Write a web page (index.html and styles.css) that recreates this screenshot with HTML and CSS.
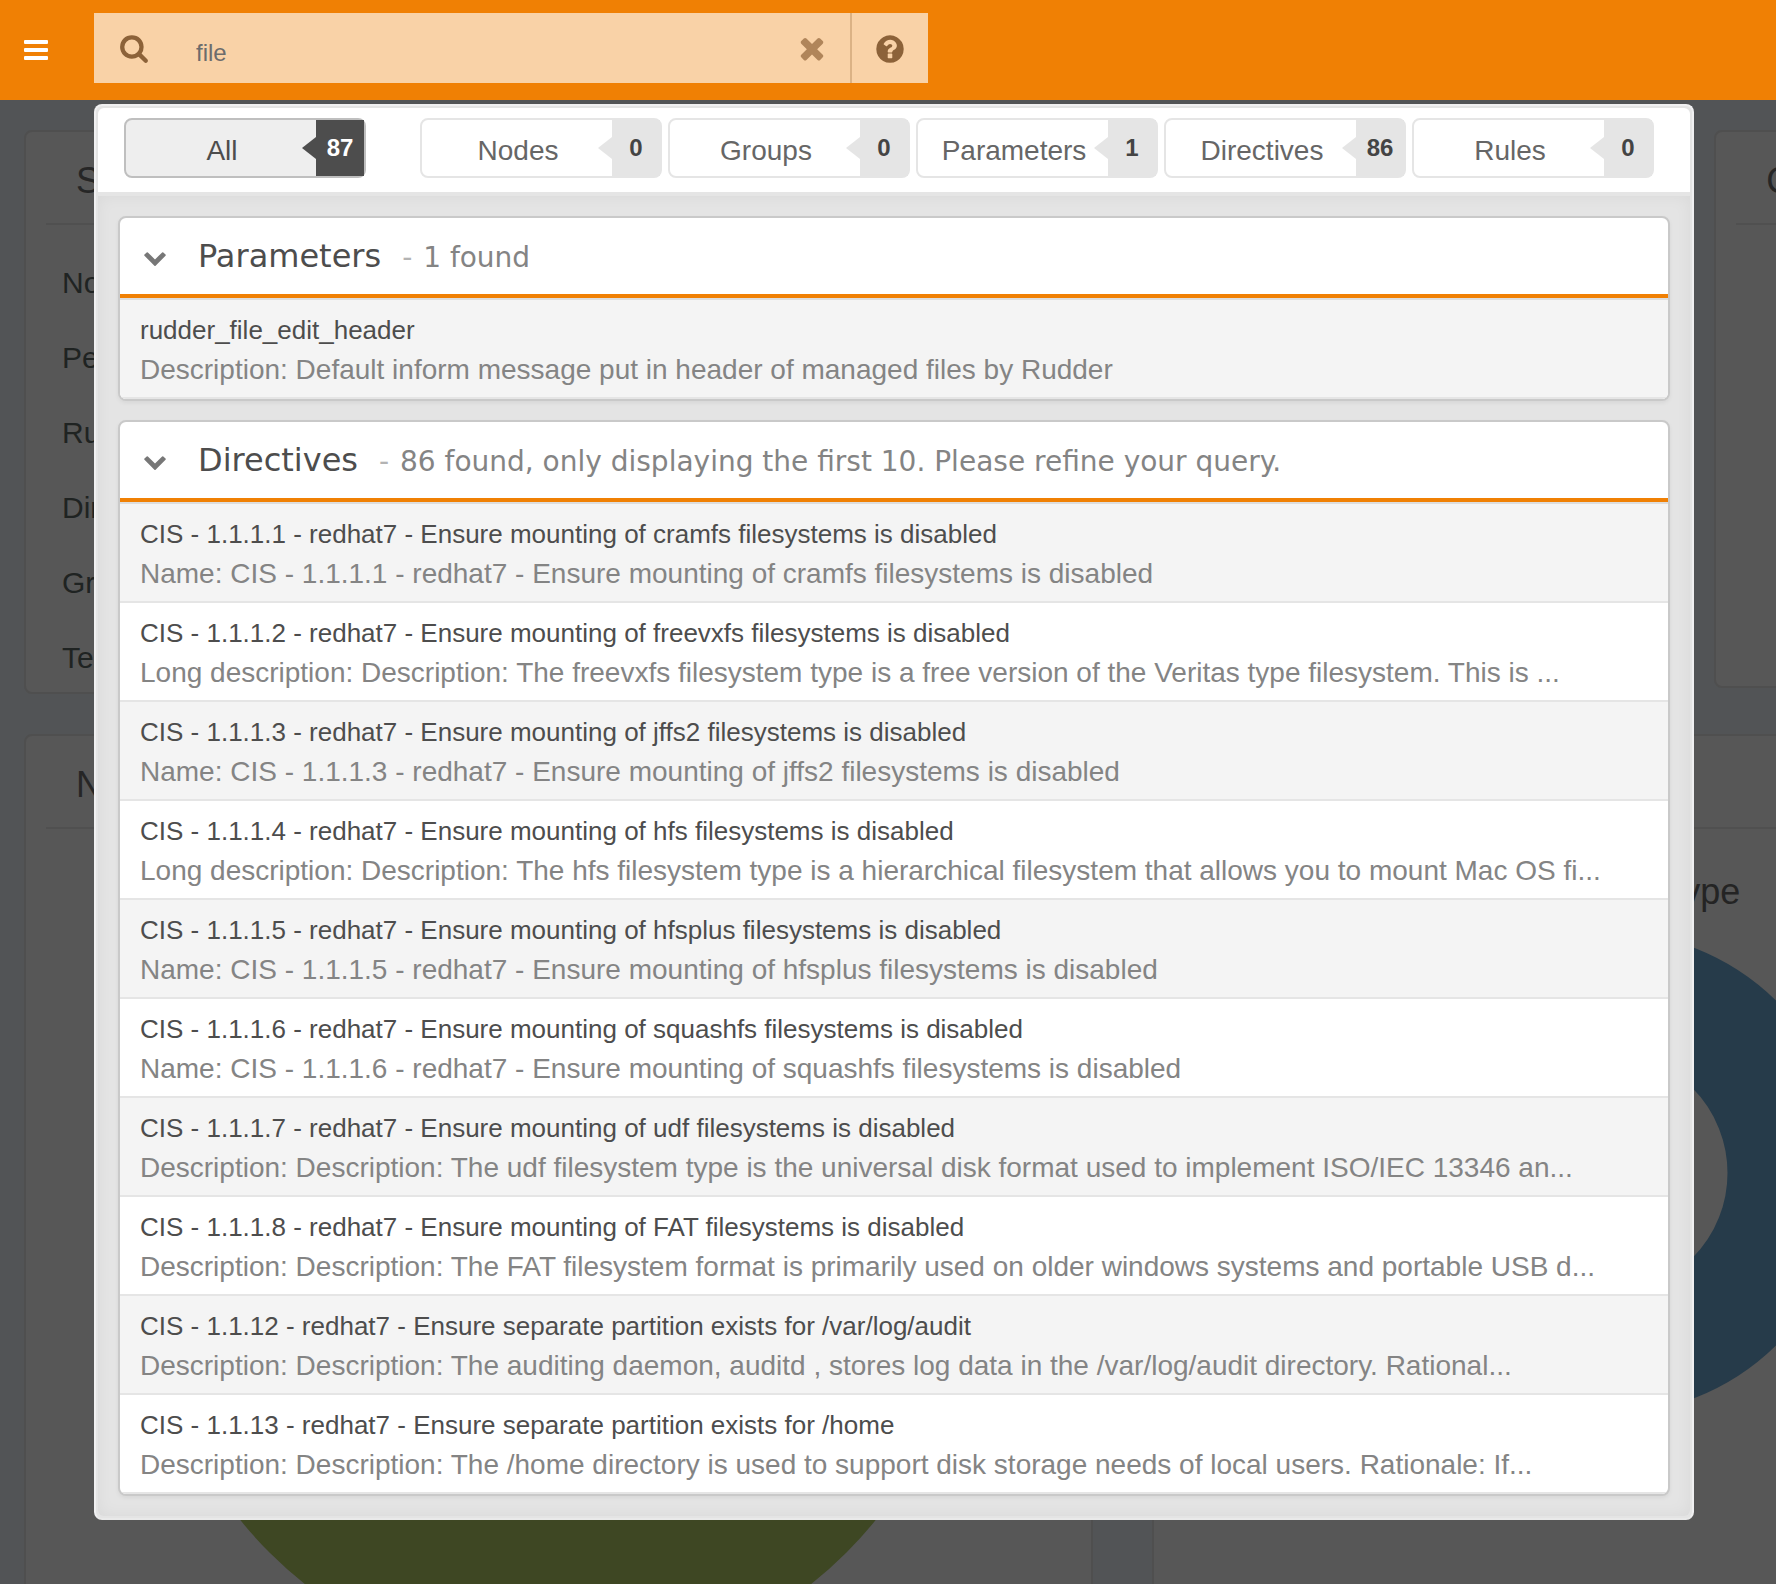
FILE: index.html
```html
<!DOCTYPE html>
<html lang="en">
<head>
<meta charset="utf-8">
<title>Rudder - Quick search</title>
<link rel="stylesheet" href="styles.css">
</head>
<body>
<svg class="sprite" aria-hidden="true">
  <symbol id="i-search" viewBox="0 0 1792 1792"><path d="M1216 832q0-185-131.5-316.5t-316.5-131.5-316.5 131.5-131.5 316.5 131.5 316.5 316.5 131.5 316.5-131.5 131.5-316.5zm512 832q0 52-38 90t-90 38q-54 0-90-38l-343-342q-179 124-399 124-143 0-273.5-55.5t-225-150-150-225-55.5-273.5 55.5-273.5 150-225 225-150 273.5-55.5 273.5 55.5 225 150 150 225 55.5 273.5q0 220-124 399l343 343q37 37 37 90z"/></symbol>
  <symbol id="i-times" viewBox="0 0 1792 1792"><path d="M1490 1322q0 40-28 68l-136 136q-28 28-68 28t-68-28l-294-294-294 294q-28 28-68 28t-68-28l-136-136q-28-28-28-68t28-68l294-294-294-294q-28-28-28-68t28-68l136-136q28-28 68-28t68 28l294 294 294-294q28-28 68-28t68 28l136 136q28 28 28 68t-28 68l-294 294 294 294q28 28 28 68z"/></symbol>
  <symbol id="i-help" viewBox="0 0 1792 1792"><path d="M1024 1376v-192q0-14-9-23t-23-9h-192q-14 0-23 9t-9 23v192q0 14 9 23t23 9h192q14 0 23-9t9-23zm256-672q0-88-55.5-163t-138.5-116-170-41q-243 0-371 213-15 24 8 42l132 100q7 6 19 6 16 0 25-12 53-68 86-92 34-24 86-24 48 0 85.5 26t37.5 59q0 38-20 61t-68 45q-63 28-115.5 86.5t-52.5 125.5v36q0 14 9 23t23 9h192q14 0 23-9t9-23q0-19 21.5-49.5t54.5-49.5q32-18 49-28.5t46-35 44.5-48 28-60.5 12.5-81zm384 192q0 209-103 385.5t-279.5 279.5-385.5 103-385.5-103-279.5-279.5-103-385.5 103-385.5 279.5-279.5 385.5-103 385.5 103 279.5 279.5 103 385.5z"/></symbol>
  <symbol id="i-chevron" viewBox="0 0 1792 1792"><path d="M1683 808l-742 741q-19 19-45 19t-45-19l-742-741q-19-19-19-45.5t19-45.5l166-165q19-19 45-19t45 19l531 531 531-531q19-19 45-19t45 19l166 165q19 19 19 45.5t-19 45.5z"/></symbol>
</svg>

<header class="topbar">
  <button class="menu" type="button" aria-label="Toggle menu">
    <svg width="24" height="20" viewBox="0 0 24 20"><rect width="24" height="4" rx="1"/><rect y="8" width="24" height="4" rx="1"/><rect y="16" width="24" height="4" rx="1"/></svg>
  </button>
  <form class="search">
    <label class="search-icon" for="query" aria-label="Search"><svg width="30" height="30"><use href="#i-search"/></svg></label>
    <input id="query" class="search-input" type="text" value="file">
    <button class="search-clear" type="button" aria-label="Clear"><svg width="34" height="34"><use href="#i-times"/></svg></button>
    <button class="search-help" type="button" aria-label="Help"><svg width="32" height="32"><use href="#i-help"/></svg></button>
  </form>
</header>

<main class="dashboard">
  <div class="row row-top">
    <section class="card card-stats">
      <h2 class="card-title">S</h2>
      <ul class="stats">
        <li>No</li>
        <li>Pe</li>
        <li>Ru</li>
        <li>Dir</li>
        <li>Gr</li>
        <li>Te</li>
      </ul>
    </section>
    <section class="card card-compliance">
      <h2 class="card-title">C</h2>
    </section>
  </div>
  <div class="row row-bottom">
    <section class="card card-nodes">
      <h2 class="card-title">N</h2>
      <svg class="chart chart-green" width="816" height="816" viewBox="0 0 816 816"><circle cx="408" cy="408" r="306" fill="none" stroke="#3e4723" stroke-width="204"/></svg>
    </section>
    <section class="card card-machines">
      <h2 class="card-title"></h2>
      <h3 class="chart-title">ype</h3>
      <svg class="chart" width="484" height="484" viewBox="0 0 484 484"><circle cx="242" cy="242" r="181" fill="none" stroke="#263b4a" stroke-width="121"/></svg>
    </section>
  </div>
</main>

<div class="results">
  <nav class="tabs">
    <button class="tab tab-all active" type="button"><span class="tab-label">All</span><span class="tab-count">87</span></button>
    <button class="tab" type="button"><span class="tab-label">Nodes</span><span class="tab-count">0</span></button>
    <button class="tab" type="button"><span class="tab-label">Groups</span><span class="tab-count">0</span></button>
    <button class="tab" type="button"><span class="tab-label">Parameters</span><span class="tab-count">1</span></button>
    <button class="tab" type="button"><span class="tab-label">Directives</span><span class="tab-count">86</span></button>
    <button class="tab" type="button"><span class="tab-label">Rules</span><span class="tab-count">0</span></button>
  </nav>
  <div class="groups">
    <section class="group">
      <h3 class="group-head"><svg class="chevron" width="24" height="24"><use href="#i-chevron"/></svg>Parameters<small class="found"><span class="dash">-</span> 1 found</small></h3>
      <ul class="items">
        <li><a class="item" href="#"><span class="name">rudder_file_edit_header</span><span class="desc">Description: Default inform message put in header of managed files by Rudder</span></a></li>
      </ul>
    </section>
    <section class="group">
      <h3 class="group-head"><svg class="chevron" width="24" height="24"><use href="#i-chevron"/></svg>Directives<small class="found"><span class="dash">-</span> 86 found, only displaying the first 10. Please refine your query.</small></h3>
      <ul class="items">
        <li><a class="item" href="#"><span class="name">CIS - 1.1.1.1 - redhat7 - Ensure mounting of cramfs filesystems is disabled</span><span class="desc">Name: CIS - 1.1.1.1 - redhat7 - Ensure mounting of cramfs filesystems is disabled</span></a></li>
        <li><a class="item" href="#"><span class="name">CIS - 1.1.1.2 - redhat7 - Ensure mounting of freevxfs filesystems is disabled</span><span class="desc">Long description: Description: The freevxfs filesystem type is a free version of the Veritas type filesystem. This is ...</span></a></li>
        <li><a class="item" href="#"><span class="name">CIS - 1.1.1.3 - redhat7 - Ensure mounting of jffs2 filesystems is disabled</span><span class="desc">Name: CIS - 1.1.1.3 - redhat7 - Ensure mounting of jffs2 filesystems is disabled</span></a></li>
        <li><a class="item" href="#"><span class="name">CIS - 1.1.1.4 - redhat7 - Ensure mounting of hfs filesystems is disabled</span><span class="desc">Long description: Description: The hfs filesystem type is a hierarchical filesystem that allows you to mount Mac OS fi...</span></a></li>
        <li><a class="item" href="#"><span class="name">CIS - 1.1.1.5 - redhat7 - Ensure mounting of hfsplus filesystems is disabled</span><span class="desc">Name: CIS - 1.1.1.5 - redhat7 - Ensure mounting of hfsplus filesystems is disabled</span></a></li>
        <li><a class="item" href="#"><span class="name">CIS - 1.1.1.6 - redhat7 - Ensure mounting of squashfs filesystems is disabled</span><span class="desc">Name: CIS - 1.1.1.6 - redhat7 - Ensure mounting of squashfs filesystems is disabled</span></a></li>
        <li><a class="item" href="#"><span class="name">CIS - 1.1.1.7 - redhat7 - Ensure mounting of udf filesystems is disabled</span><span class="desc">Description: Description: The udf filesystem type is the universal disk format used to implement ISO/IEC 13346 an...</span></a></li>
        <li><a class="item" href="#"><span class="name">CIS - 1.1.1.8 - redhat7 - Ensure mounting of FAT filesystems is disabled</span><span class="desc">Description: Description: The FAT filesystem format is primarily used on older windows systems and portable USB d...</span></a></li>
        <li><a class="item" href="#"><span class="name">CIS - 1.1.12 - redhat7 - Ensure separate partition exists for /var/log/audit</span><span class="desc">Description: Description: The auditing daemon, auditd , stores log data in the /var/log/audit directory. Rational...</span></a></li>
        <li><a class="item" href="#"><span class="name">CIS - 1.1.13 - redhat7 - Ensure separate partition exists for /home</span><span class="desc">Description: Description: The /home directory is used to support disk storage needs of local users. Rationale: If...</span></a></li>
      </ul>
    </section>
  </div>
</div>
</body>
</html>
```
FILE: styles.css
```css
* { box-sizing: border-box; }

body {
  margin: 0;
  position: relative;
  background: #525456;
  font-family: "Liberation Sans", Arial, sans-serif;
}

h2, h3, ul { margin: 0; padding: 0; font-weight: normal; }
ul { list-style: none; }
svg { display: block; fill: currentColor; flex: none; }
button { margin: 0; padding: 0; border: 0; background: none; font: inherit; color: inherit; cursor: pointer; }
.sprite { position: absolute; width: 0; height: 0; }

/* Top bar */
.topbar {
  display: flex;
  align-items: center;
  height: 100px;
  padding: 0 24px;
  background: #f08004;
}
.menu { width: 70px; color: #fff; }
.search {
  display: flex;
  flex: 0 1 834px;
  height: 70px;
  margin-bottom: 4px;
  background: #f9d2a7;
  color: #8c6239;
}
.search-icon { display: flex; align-items: center; padding-left: 25px; }
.search-input {
  flex: 1;
  min-width: 0;
  margin-left: 47px;
  padding: 10px 0 0;
  border: 0;
  outline: 0;
  background: none;
  font: inherit;
  font-size: 24px;
  color: #6c6c6c;
}
.search-clear { display: flex; align-items: center; padding-right: 21px; color: #b0855a; }
.search-help {
  display: flex;
  align-items: center;
  justify-content: center;
  width: 78px;
  padding-top: 2px;
  border-left: 2px solid #dbb285;
}

/* Dimmed dashboard behind the results */
.dashboard {
  display: flex;
  flex-direction: column;
  gap: 40px;
  height: calc(100vh - 100px);
  padding: 30px 0 0 24px;
  overflow: hidden;
}
.row { display: flex; flex: none; align-items: flex-start; }
.row-top { gap: 639px; }
.row-bottom { gap: 59px; }
.card {
  flex: none;
  padding: 0 20px;
  border: 2px solid #4f4f4f;
  border-radius: 8px;
  background: #575757;
}
.card-title {
  height: 93px;
  padding: 0 30px;
  border-bottom: 2px solid #505050;
  font-size: 36px;
  line-height: 98px;
  color: #262626;
}
.card-stats { width: 60%; height: 564px; }
.card-compliance { width: 60%; height: 558px; }
.card-nodes { width: 61%; height: 1000px; }
.card-machines { width: 52%; height: 1000px; }
.stats {
  padding: 20px 16px;
  font-size: 30px;
  line-height: 75px;
  color: #1f2322;
}
.chart-title {
  width: 266px;
  margin: 0 auto;
  padding-top: 41px;
  font-size: 36px;
  line-height: 44px;
  text-align: right;
  color: #242424;
}
.chart { margin: 17px auto 0; }
.chart-green { margin-top: 27px; }

/* Search results */
.results {
  position: absolute;
  top: 104px;
  left: 94px;
  right: 82px;
  padding: 2px;
  border: 2px solid #f0f0f1;
  border-bottom-color: #e9e9e9;
  border-radius: 8px;
  background: #e4e4e4;
}
.tabs {
  display: flex;
  gap: 6px;
  height: 88px;
  padding: 10px 36px 14px 26px;
  border-bottom: 4px solid #e5e5e5;
  border-radius: 6px 6px 0 0;
  background: #fff;
}
.tab {
  display: flex;
  flex: 1;
  align-items: stretch;
  min-width: 0;
  height: 60px;
  border: 2px solid #e5e5e5;
  border-radius: 8px;
  color: #666;
}
.tab-all { margin-right: 48px; }
.tab-label { flex: 1; padding-left: 2px; font-size: 28px; line-height: 62px; }
.tab-count {
  position: relative;
  width: 48px;
  background: #e5e5e5;
  font-size: 24px;
  font-weight: bold;
  line-height: 56px;
  color: #444;
}
.tab-count::before {
  content: "";
  position: absolute;
  top: 17px;
  right: 100%;
  border: solid transparent;
  border-width: 11px 14px 11px 0;
  border-right-color: #e5e5e5;
}
.tab.active { border-color: #bfbfbf; background: #eee; color: #4d4d4d; }
.active .tab-count { background: #4d4d4d; color: #fff; }
.active .tab-count::before { border-right-color: #4d4d4d; }

.groups {
  display: flex;
  flex-direction: column;
  gap: 19px;
  padding: 20px;
  border-radius: 0 0 6px 6px;
  box-shadow: inset 0 0 16px rgba(0, 0, 0, 0.05);
}
.group {
  border: 2px solid #c9c9c9;
  border-radius: 8px;
  background: #fff;
  box-shadow: 0 2px 4px rgba(0, 0, 0, 0.06);
  overflow: hidden;
}
.group-head {
  display: flex;
  align-items: baseline;
  height: 80px;
  padding-left: 23px;
  border-bottom: 4px solid #f08004;
  font-family: "DejaVu Sans", sans-serif;
  font-size: 32px;
  line-height: 76px;
  color: #4d4d4d;
}
.chevron { align-self: center; margin: 2px 31px 0 0; color: #777; }
.found { margin-left: 21px; font-size: 28px; color: #848484; }
.dash { margin-right: 2px; color: #b3b3b3; }
.items { border-top: 2px solid #ddd; }
.item {
  display: block;
  padding: 10px 20px 7px;
  border-bottom: 2px solid #e5e5e5;
  text-decoration: none;
  white-space: nowrap;
}
.items li:nth-child(odd) { background: #f4f4f4; }
.name, .desc { display: block; line-height: 40px; }
.name { font-size: 26px; color: #4d4d4d; }
.desc { font-size: 28px; color: #848484; }
```
